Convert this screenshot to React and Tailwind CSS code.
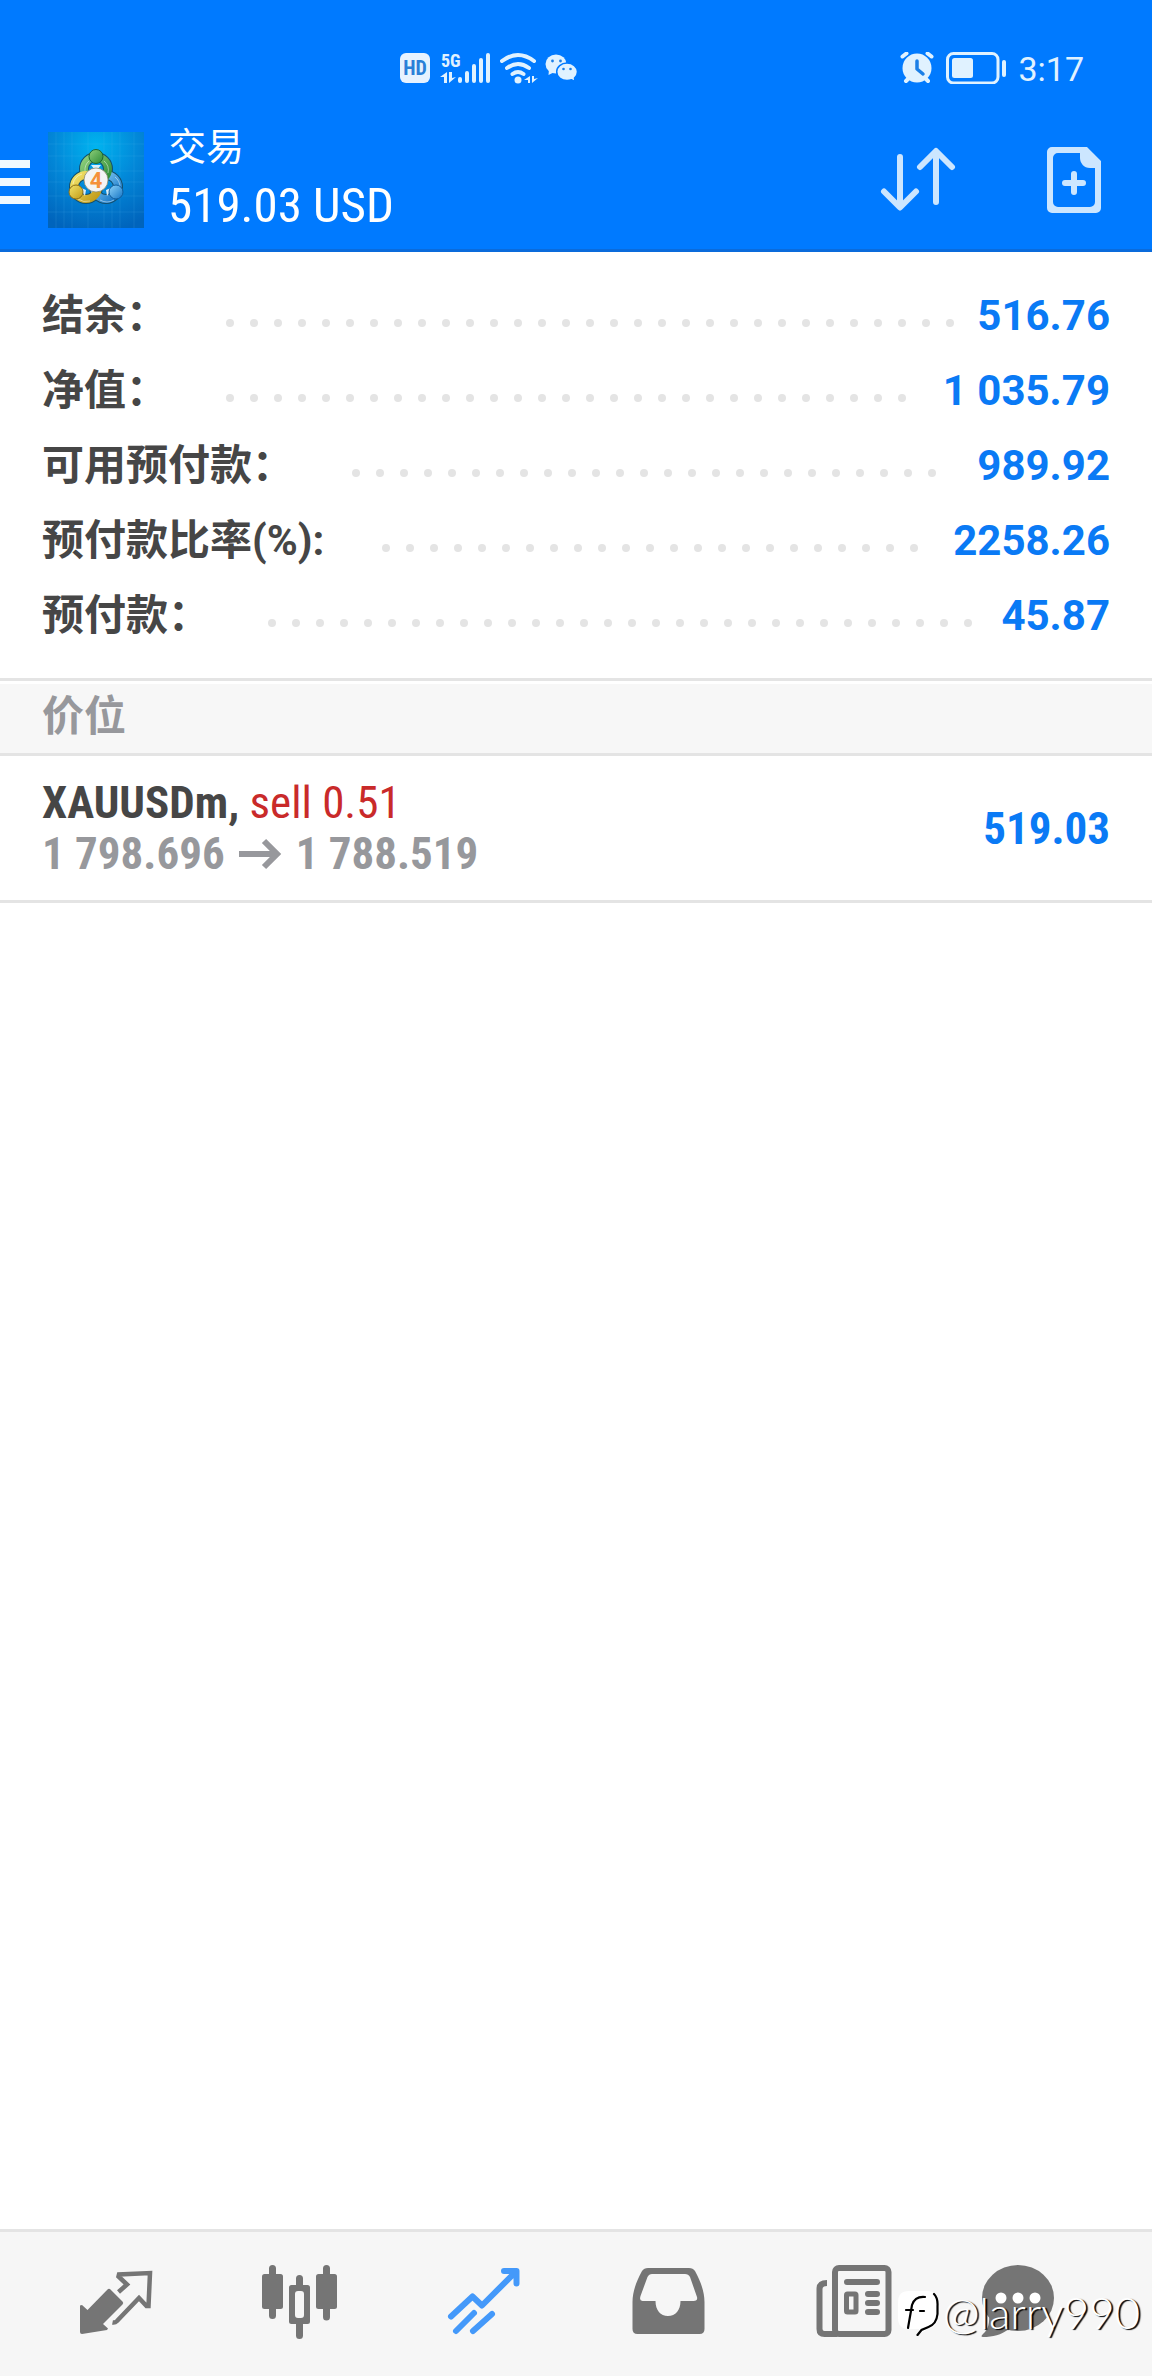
import React, { useState } from 'react';

const summary = [
    { label: '结余：', value: '516.76' },
    { label: '净值：', value: '1 035.79' },
    { label: '可用预付款：', value: '989.92' },
    { label: '预付款比率(%):', value: '2258.26' },
    { label: '预付款：', value: '45.87' },
];

const positions = [
    { symbol: 'XAUUSDm', side: 'sell', volume: '0.51', open: '1 798.696', current: '1 788.519', profit: '519.03' },
];

const StatusBar = () => (
    <div className="flex h-27 items-center justify-between pt-7 pr-[68px] pl-[400px] text-[#e0f2ff]">
        <div className="flex items-center gap-2">
            <div className="flex size-[30px] items-center justify-center rounded-md bg-[#e6f2ff] font-['Roboto_Condensed','Liberation_Sans_Narrow',sans-serif] text-[20px] leading-none font-bold text-[#2a80d8]">
                HD
            </div>
            <svg className="h-[46px] w-[54px]" viewBox="438 44 54 46" fill="currentColor">
                <text x="441" y="66" fontSize="18" fontWeight="700" fontFamily="'Roboto Condensed','Liberation Sans Narrow',sans-serif">5G</text>
                <path d="M447 71v11h-3v-6h-4zM449 82V71h3v6l4-1z" />
                <g stroke="currentColor" strokeWidth="4" strokeLinecap="round">
                    <path d="M460 78v2M467 72v8M474 65v15M481 59v21M488 54v26" />
                </g>
            </svg>
            <svg className="h-8 w-10" viewBox="500 51 40 32" fill="currentColor">
                <g fill="none" stroke="currentColor" strokeWidth="4" strokeLinecap="round">
                    <path d="M502 60q16-12 32 0M507 67q11-8 22 0M512.500 73q5.500-4 11 0" />
                </g>
                <circle cx="518" cy="79" r="3.500" />
                <path d="M530 75v7h-2v-3h-4zM532 82v-7h2v3l4-1z" />
            </svg>
            <svg className="h-8 w-8" viewBox="548 51 32 32" overflow="visible" fill="currentColor">
                <ellipse cx="556" cy="63" rx="10.500" ry="9.500" />
                <path d="M549 68l-.5 6 6-3z" />
                <g stroke="#007aff" strokeWidth="1.500">
                    <path d="M567 62c5.800 0 10.500 4 10.500 8.800 0 2.500-1.200 4.700-3 6.200l.5 3.500-3.500-1.700c-1.300.5-3 .8-4.500.8-5.800 0-10.300-4-10.300-8.800S561.200 62 567 62z" />
                </g>
                <g fill="#1b7fe6">
                    <circle cx="552.500" cy="60" r="1.400" />
                    <circle cx="560.500" cy="60" r="1.400" />
                    <circle cx="563.500" cy="68" r="1.300" />
                    <circle cx="570.500" cy="68" r="1.300" />
                </g>
            </svg>
        </div>
        <div className="flex items-center gap-3">
            <svg className="h-8 w-[34px]" viewBox="901 52 34 32" fill="currentColor">
                <circle cx="918" cy="68" r="14.500" />
                <path d="M903.500 56.500l4-3M932.500 56.500l-4-3M907 81l3-3M929 81l-3-3" stroke="currentColor" strokeWidth="4" strokeLinecap="round" />
                <path d="M918 61v8l6 5" fill="none" stroke="#1b7fe6" strokeWidth="3.500" strokeLinecap="round" strokeLinejoin="round" />
            </svg>
            <svg className="h-8 w-[60px]" viewBox="946 51 60 32" fill="currentColor">
                <rect x="947.500" y="52.500" width="50.500" height="29.500" rx="6" fill="none" stroke="currentColor" strokeWidth="3" />
                <rect x="952" y="57" width="21" height="20" rx="2.500" />
                <rect x="1002" y="59" width="4" height="17" rx="2" />
            </svg>
            <span className="pt-0.5 font-['Roboto',sans-serif] text-[34px] leading-10">3:17</span>
        </div>
    </div>
);

const AppLogo = () => (
    <svg className="size-24 shrink-0" viewBox="0 0 96 96">
        <defs>
            <radialGradient id="sky" cx="0.5" cy="0.15" r="0.9">
                <stop offset="0" stopColor="#00b4f0" />
                <stop offset="0.5" stopColor="#0287d8" />
                <stop offset="1" stopColor="#0064bc" />
            </radialGradient>
            <linearGradient id="green" x1="0" y1="0" x2="1" y2="1">
                <stop offset="0" stopColor="#8fd07c" />
                <stop offset="1" stopColor="#2c8a35" />
            </linearGradient>
            <linearGradient id="yellow" x1="0" y1="0" x2="1" y2="1">
                <stop offset="0" stopColor="#f3e46a" />
                <stop offset="1" stopColor="#c09a17" />
            </linearGradient>
            <linearGradient id="blue" x1="0" y1="0" x2="1" y2="1">
                <stop offset="0" stopColor="#8fd4fa" />
                <stop offset="1" stopColor="#1273c4" />
            </linearGradient>
        </defs>
        <rect width="96" height="96" fill="url(#sky)" />
        <path d="M8 0v96M16 0v96M24 0v96M40 0v96M56 0v96M64 0v96M72 0v96M86 0v96M0 12h96M0 24h96M0 39h96M0 50h96M0 64h96M0 80h96" stroke="#5cc0f5" strokeOpacity="0.15" />
        <g fill="none" strokeWidth="10">
            <g stroke="#14506e">
                <circle cx="48" cy="37" r="12" />
                <circle cx="38" cy="55" r="12" />
                <circle cx="58" cy="55" r="12" />
            </g>
            <g strokeWidth="8">
                <circle cx="58" cy="55" r="12" stroke="url(#blue)" />
                <circle cx="48" cy="37" r="12" stroke="url(#green)" />
                <circle cx="38" cy="55" r="12" stroke="url(#yellow)" />
            </g>
            <g stroke="#ffffff" strokeOpacity="0.45" strokeWidth="1">
                <path d="M37 39a12 12 0 0 1 4-10M56 29a12 12 0 0 1 4 12M25 52a13 13 0 0 1 9-10M30 67a14 14 0 0 0 12 2M52 68a14 14 0 0 0 14 0M67 45a13 13 0 0 1 5 10" />
            </g>
        </g>
        <path d="M43 33h10l-4 5h-2zM31 55l6 9 1-6zM65 55l-6 9-1-6z" fill="#ffffff" fillOpacity="0.85" />
        <circle cx="48" cy="24.500" r="7" fill="url(#green)" stroke="#1c6630" />
        <circle cx="28" cy="60" r="7" fill="url(#yellow)" stroke="#8a6e18" />
        <circle cx="68" cy="60" r="7" fill="url(#blue)" stroke="#0f5c9c" />
        <circle cx="48" cy="48" r="12" fill="#f4f4f4" stroke="#8a8a70" strokeWidth="0.800" />
        <text x="48" y="56" textAnchor="middle" fontSize="22" fontWeight="700" fontFamily="Roboto,sans-serif" fill="#f5913a">4</text>
    </svg>
);

const Header = () => (
    <header className="bg-[#007aff]">
        <StatusBar />
        <div className="flex h-36 items-center pr-[50px] shadow-[inset_0_-3px_0_#0a6bdb]">
            <button aria-label="菜单" className="flex w-[30px] shrink-0 flex-col gap-2.5 pt-1">
                <span className="h-2 bg-[#f0f9ff]" />
                <span className="h-2 bg-[#f0f9ff]" />
                <span className="h-2 bg-[#f0f9ff]" />
            </button>
            <div className="ml-[18px]">
                <AppLogo />
            </div>
            <div className="ml-6 flex-1 text-white">
                <h1 className="font-['Noto_Sans_CJK_SC',sans-serif] text-[38px] leading-12">交易</h1>
                <p className="pt-1 font-['Roboto_Condensed','Liberation_Sans_Narrow',sans-serif] text-[49px] leading-17">519.03 USD</p>
            </div>
            <button aria-label="排序" className="text-[#cce6ff]">
                <svg className="h-[66px] w-[76px]" viewBox="880 147 76 66" fill="none" stroke="currentColor" strokeWidth="6" strokeLinecap="round" strokeLinejoin="round">
                    <path d="M900 157v50M884 191.500l16 16 16-16M936 202v-50M920 167l16-16 16 16" />
                </svg>
            </button>
            <button aria-label="新订单" className="ml-[90px] text-[#cce6ff]">
                <svg className="h-[66px] w-14" viewBox="1046 147 56 66" fill="currentColor">
                    <path fillRule="evenodd" d="M1052 147h35l14 14v47a5 5 0 0 1-5 5h-44a5 5 0 0 1-5-5v-56a5 5 0 0 1 5-5zM1058 153a5 5 0 0 0-5 5v44a5 5 0 0 0 5 5h32a5 5 0 0 0 5-5v-34h-5c-6 0-10-5-10-10v-5z" />
                    <path d="M1074 174v18M1065 183h18" stroke="currentColor" strokeWidth="6" strokeLinecap="round" />
                </svg>
            </button>
        </div>
    </header>
);

const Dots = () => (
    <div className="mr-5 ml-[58px] flex h-2 flex-1 flex-wrap gap-4 overflow-hidden">
        {Array.from({ length: 60 }, (_, i) => (
            <span key={i} className="size-2 rounded-full bg-[#e4e4e4]" />
        ))}
    </div>
);

const Summary = () => (
    <dl className="px-[42px] pt-[26px] pb-[25px]">
        {summary.map((row) => (
            <div key={row.label} className="flex h-[75px] items-center">
                <dt className="font-['Roboto','Noto_Sans_CJK_SC',sans-serif] text-[42px] leading-[75px] font-bold text-[#464646]">{row.label}</dt>
                <dd className="flex min-w-0 flex-1 items-center">
                    <span aria-hidden="true" className="flex flex-1 pt-3.5">
                        <Dots />
                    </span>
                    <span className="font-['Roboto',sans-serif] text-[42px] leading-[75px] font-bold text-[#0a7af5]">{row.value}</span>
                </dd>
            </div>
        ))}
    </dl>
);

const Positions = () => (
    <section>
        <div className="border-y-3 border-[#e4e4e4] pt-[3px]">
            <h2 className="h-[69px] bg-[#f7f7f7] px-[42px] font-['Noto_Sans_CJK_SC',sans-serif] text-[42px] leading-[58px] font-bold text-[#97989c]">价位</h2>
        </div>
        <ul>
            {positions.map((p) => (
                <li key={p.symbol} className="flex h-[147px] items-center justify-between border-b-3 border-[#e4e4e4] px-[42px] font-['Roboto_Condensed','Liberation_Sans_Narrow',sans-serif] text-[45px] leading-[51px] font-bold">
                    <div>
                        <p className="text-[#464646]">
                            {p.symbol}, <span className="font-normal text-[#c92a2a]">{p.side} {p.volume}</span>
                        </p>
                        <p className="flex items-center text-[#97989c]">
                            {p.open}
                            <svg className="mx-3.5 h-8 w-[43px]" viewBox="0 0 43 32" fill="none" stroke="currentColor" strokeWidth="6">
                                <path d="M0 16h38M25 3l13 13-13 13" />
                            </svg>
                            {p.current}
                        </p>
                    </div>
                    <p className="text-[#0a7af5]">{p.profit}</p>
                </li>
            ))}
        </ul>
    </section>
);

const QuotesIcon = () => (
    <svg className="size-24" viewBox="68 2256 96 96" fill="currentColor">
        <path d="M80 2305.500l2-.5 5.500 5 20-20.500q1.500-1.500 3 0l12 12q1.500 1.500 0 3L103 2324l5 4.500-1 1.500-25 4q-2 0-2-2z" />
        <path d="M118.500 2292l8.500-7.500-8.500-8 .5-2 31-1.500-1.500 33h-2l-7.500-8-22 23q-2 2-4.500 1.500" fill="none" stroke="currentColor" strokeWidth="4.500" />
    </svg>
);

const ChartIcon = () => (
    <svg className="size-24" viewBox="252 2256 96 96" fill="currentColor">
        <rect x="262" y="2274" width="21" height="35" rx="2.500" />
        <rect x="316" y="2274" width="21" height="35" rx="2.500" />
        <path fillRule="evenodd" d="M291.500 2285h16a2.500 2.500 0 0 1 2.500 2.500v34a2.500 2.500 0 0 1-2.500 2.500h-16a2.500 2.500 0 0 1-2.500-2.500v-34a2.500 2.500 0 0 1 2.500-2.500zM298 2291a3 3 0 0 0-3 3v21a3 3 0 0 0 3 3h3a3 3 0 0 0 3-3v-21a3 3 0 0 0-3-3z" />
        <path d="M272.500 2268.500v47M326.500 2268.500v48.500M299.500 2278.500v8M299.500 2324v11.500" stroke="currentColor" strokeWidth="7" strokeLinecap="round" />
    </svg>
);

const TradeIcon = () => (
    <svg className="size-24" viewBox="436 2256 96 96" fill="none" stroke="currentColor" strokeWidth="6" strokeLinecap="round" strokeLinejoin="round">
        <path d="M451 2316.500l21.500-20 9.500 9 34-34M504 2271h12.500v12.500" />
        <path d="M456 2331l18-18M473 2331l19-17" />
    </svg>
);

const HistoryIcon = () => (
    <svg className="size-24" viewBox="620 2256 96 96" fill="currentColor">
        <path fillRule="evenodd" d="M648 2268h41q4 0 6 3c5 9 9.500 20 9.500 31v27q0 5-5 5h-62q-5 0-5-5v-27c0-11 4.500-22 9.500-31q2-3 6-3zM652 2274q-3 0-4.500 3l-7 19q-1.500 5 2 5h13c0 9 5 15 12.500 15s12.500-6 12.500-15h13q4.500 0 3.500-4l-7-20q-1.500-3-5-3z" />
    </svg>
);

const NewsIcon = () => (
    <svg className="size-24" viewBox="804 2256 96 96" fill="none" stroke="currentColor" strokeWidth="6">
        <rect x="835" y="2268" width="53.500" height="66" rx="4" />
        <path d="M827 2283q-7.500 0-7.500 6v40q0 5 5 5h13" />
        <path d="M847 2282h30M868 2294h9M868 2303h9M868 2312h9" strokeLinecap="round" />
        <rect x="846.500" y="2294" width="9.500" height="18" strokeWidth="5" rx="1" />
    </svg>
);

const ChatIcon = () => (
    <svg className="size-24" viewBox="970 2256 96 96" fill="currentColor">
        <ellipse cx="1018" cy="2298" rx="36" ry="33" />
        <path d="M989 2312c1 11-1 18-6 22-2 2-2 3 0 3 10 0 18-2 26-8z" />
        <g fill="#ffffff">
            <circle cx="1001" cy="2298" r="5.500" />
            <circle cx="1018" cy="2298" r="5.500" />
            <circle cx="1035" cy="2298" r="5.500" />
        </g>
    </svg>
);

const tabs = [
    { id: 'quotes', label: '行情', Icon: QuotesIcon },
    { id: 'chart', label: '图表', Icon: ChartIcon },
    { id: 'trade', label: '交易', Icon: TradeIcon },
    { id: 'history', label: '历史', Icon: HistoryIcon },
    { id: 'news', label: '新闻', Icon: NewsIcon },
    { id: 'chat', label: '聊天', Icon: ChatIcon },
];

const Watermark = () => (
    <div className="pointer-events-none absolute right-3 bottom-10 flex items-center gap-1 text-white">
        <svg className="h-12 w-[42px]" viewBox="896 2290 42 48">
            <path d="M908 2293h18q11 0 11 11v14q0 11-10 13l-10 6 1-6h-10q-11 0-11-11v-16q0-11 11-11z" fill="#ffffff" />
            <g fill="none" stroke="#000000" strokeWidth="2.200" strokeLinecap="round">
                <path d="M924 2299q-10-1-13 8l-4 23M905 2312h7M919 2313h4" />
                <path d="M933 2296q4 4 3.500 12v8q-1 10-9 13l-7 3-4 5" />
            </g>
        </svg>
        <span className="font-['Lato',sans-serif] text-[44px] leading-12 font-light [text-shadow:2px_1px_1px_#000]">@larry990</span>
    </div>
);

const App = () => {
    const [activeTab, setActiveTab] = useState('trade');

    return (
        <div className="flex min-h-screen flex-col bg-white">
            <Header />
            <main className="flex-1">
                <Summary />
                <Positions />
            </main>
            <footer className="relative border-t-3 border-[#e4e4e4] bg-[#f6f6f6]">
                <nav className="grid h-36 grid-cols-[repeat(5,184fr)_148fr] items-center pr-[60px] pl-6">
                    {tabs.map(({ id, label, Icon }) => (
                        <button
                            key={id}
                            aria-label={label}
                            onClick={() => setActiveTab(id)}
                            className={`flex justify-center ${activeTab === id ? 'text-[#4499fa]' : 'text-[#757575]'}`}
                        >
                            <Icon />
                        </button>
                    ))}
                </nav>
                <Watermark />
            </footer>
        </div>
    );
};

export default App;
